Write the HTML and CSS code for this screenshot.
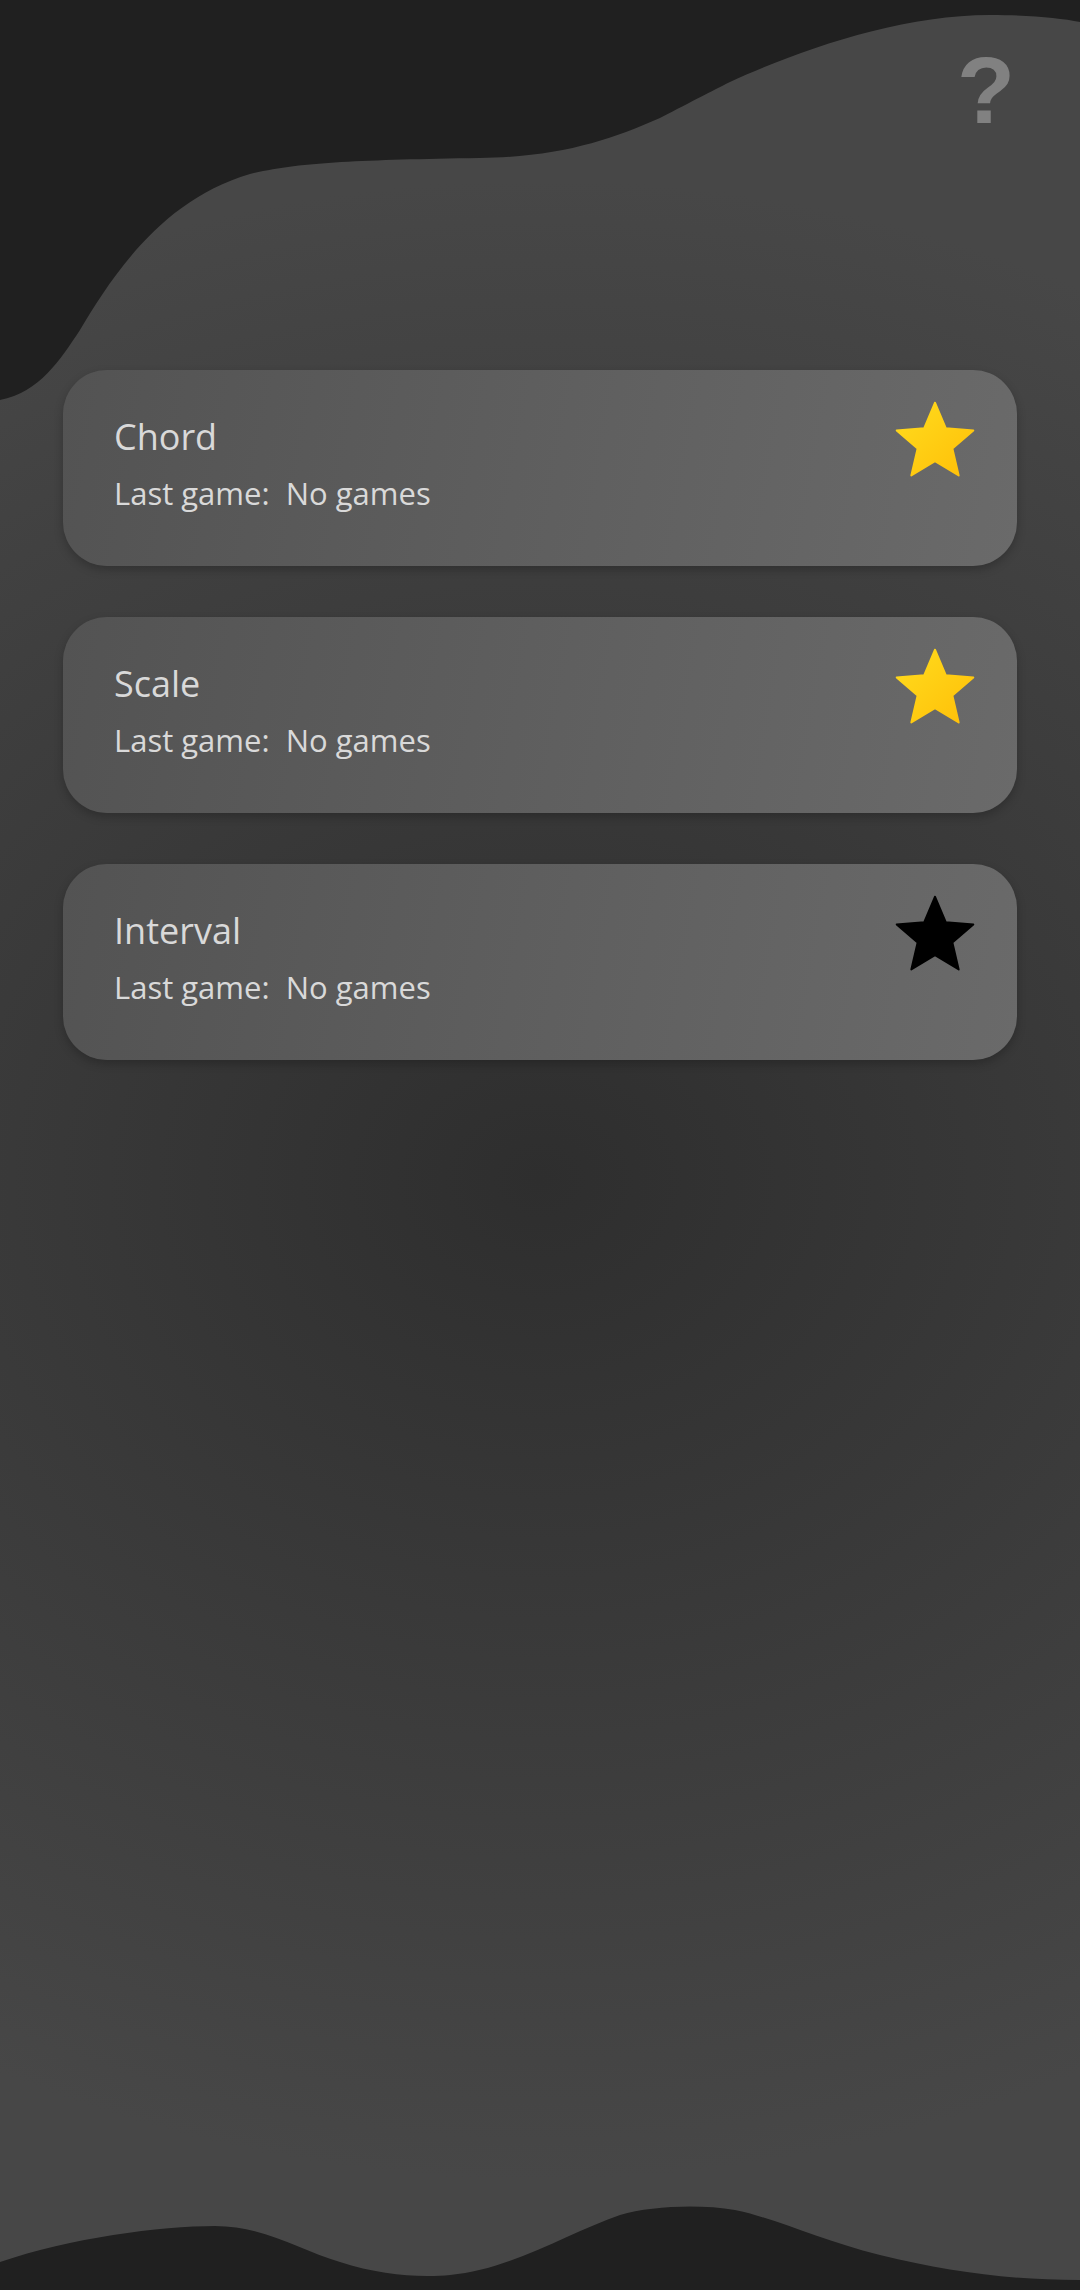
FILE: index.html
```html
<!DOCTYPE html>
<html lang="en">
<head>
<meta charset="utf-8">
<title>Games</title>
<link rel="stylesheet" href="styles.css">
</head>
<body>
<div class="screen">
  <svg class="bg" width="1080" height="2290" viewBox="0 0 1080 2290" aria-hidden="true">
    <defs>
      <radialGradient id="blobGrad" gradientUnits="userSpaceOnUse" cx="540" cy="1180" r="1000" gradientTransform="translate(540 1180) scale(1.2 1) translate(-540 -1180)">
        <stop offset="0" stop-color="#2e2e2e"/>
        <stop offset="1" stop-color="#474747"/>
      </radialGradient>
    </defs>
    <path fill="url(#blobGrad)" d="M0,400 C40,392 60,360 80,330 C110,280 160,200 250,174 C300,162 360,160 480,158 C560,157 610,140 660,118 C695,100 710,92 730,82 C800,50 900,15 990,15 C1030,15 1060,18 1080,22 L1080,2280 C1010,2280 950,2272 880,2255 C820,2240 775,2218 735,2210 C700,2204 650,2206 620,2215 C570,2232 510,2270 450,2275 C420,2278 380,2275 340,2262 C300,2250 265,2226 215,2226 C160,2226 70,2238 0,2262 Z"/>
  </svg>

  <button class="help" type="button" aria-label="Help">?</button>

  <main class="list">
    <article class="card">
      <div class="card-text">
        <h2 class="card-title">Chord</h2>
        <p class="card-sub">Last game:&nbsp; No games</p>
      </div>
      <svg class="star" width="92" height="92" viewBox="0 0 24 24">
        <defs>
          <linearGradient id="gold1" x1="0" y1="0" x2="1" y2="1">
            <stop offset="0" stop-color="#ffdc1e"/>
            <stop offset="1" stop-color="#ffbf08"/>
          </linearGradient>
        </defs>
        <path fill="url(#gold1)" stroke="url(#gold1)" stroke-width="0.5" stroke-linejoin="round" d="M12 17.27L18.18 21l-1.64-7.03L22 9.24l-7.19-.61L12 2 9.19 8.63 2 9.24l5.46 4.73L5.82 21z"/>
      </svg>
    </article>

    <article class="card">
      <div class="card-text">
        <h2 class="card-title">Scale</h2>
        <p class="card-sub">Last game:&nbsp; No games</p>
      </div>
      <svg class="star" width="92" height="92" viewBox="0 0 24 24">
        <defs>
          <linearGradient id="gold2" x1="0" y1="0" x2="1" y2="1">
            <stop offset="0" stop-color="#ffdc1e"/>
            <stop offset="1" stop-color="#ffbf08"/>
          </linearGradient>
        </defs>
        <path fill="url(#gold2)" stroke="url(#gold2)" stroke-width="0.5" stroke-linejoin="round" d="M12 17.27L18.18 21l-1.64-7.03L22 9.24l-7.19-.61L12 2 9.19 8.63 2 9.24l5.46 4.73L5.82 21z"/>
      </svg>
    </article>

    <article class="card">
      <div class="card-text">
        <h2 class="card-title">Interval</h2>
        <p class="card-sub">Last game:&nbsp; No games</p>
      </div>
      <svg class="star" width="92" height="92" viewBox="0 0 24 24">
        <path fill="#000" stroke="#000" stroke-width="0.5" stroke-linejoin="round" d="M12 17.27L18.18 21l-1.64-7.03L22 9.24l-7.19-.61L12 2 9.19 8.63 2 9.24l5.46 4.73L5.82 21z"/>
      </svg>
    </article>
  </main>
</div>
</body>
</html>
```

FILE: styles.css
```css
html, body {
  margin: 0;
  padding: 0;
  background: #202020;
}

.screen {
  position: relative;
  width: 1080px;
  height: 2290px;
  overflow: hidden;
  background: #202020;
  font-family: "Open Sans", "Noto Sans", sans-serif;
}

.bg {
  position: absolute;
  left: 0;
  top: 0;
  display: block;
}

.help {
  position: absolute;
  left: 957px;
  top: 43px;
  margin: 0;
  padding: 0;
  border: 0;
  background: none;
  color: #818181;
  font-family: "Liberation Sans", Arial, sans-serif;
  font-weight: 700;
  font-size: 95px;
  line-height: 95px;
  cursor: pointer;
}

.list {
  position: relative;
  display: flex;
  flex-direction: column;
  gap: 51px;
  padding: 370px 0 0 63px;
  width: 954px;
}

.card {
  display: flex;
  justify-content: space-between;
  align-items: flex-start;
  height: 196px;
  box-sizing: border-box;
  padding: 0 36px 0 51px;
  border-radius: 44px;
  background: linear-gradient(100deg, #535353 0%, #6a6a6a 100%);
  box-shadow: 0 4px 10px rgba(0, 0, 0, 0.22);
}

.card-text {
  padding-top: 40px;
}

.card-title {
  margin: 0;
  font-size: 36px;
  font-weight: 400;
  line-height: 54px;
  color: #d9d9d9;
}

.card-sub {
  margin: 2px 0 0;
  font-size: 31px;
  font-weight: 400;
  line-height: 54px;
  color: #d9d9d9;
}

.star {
  display: block;
  margin-top: 25px;
  flex: none;
}
```
